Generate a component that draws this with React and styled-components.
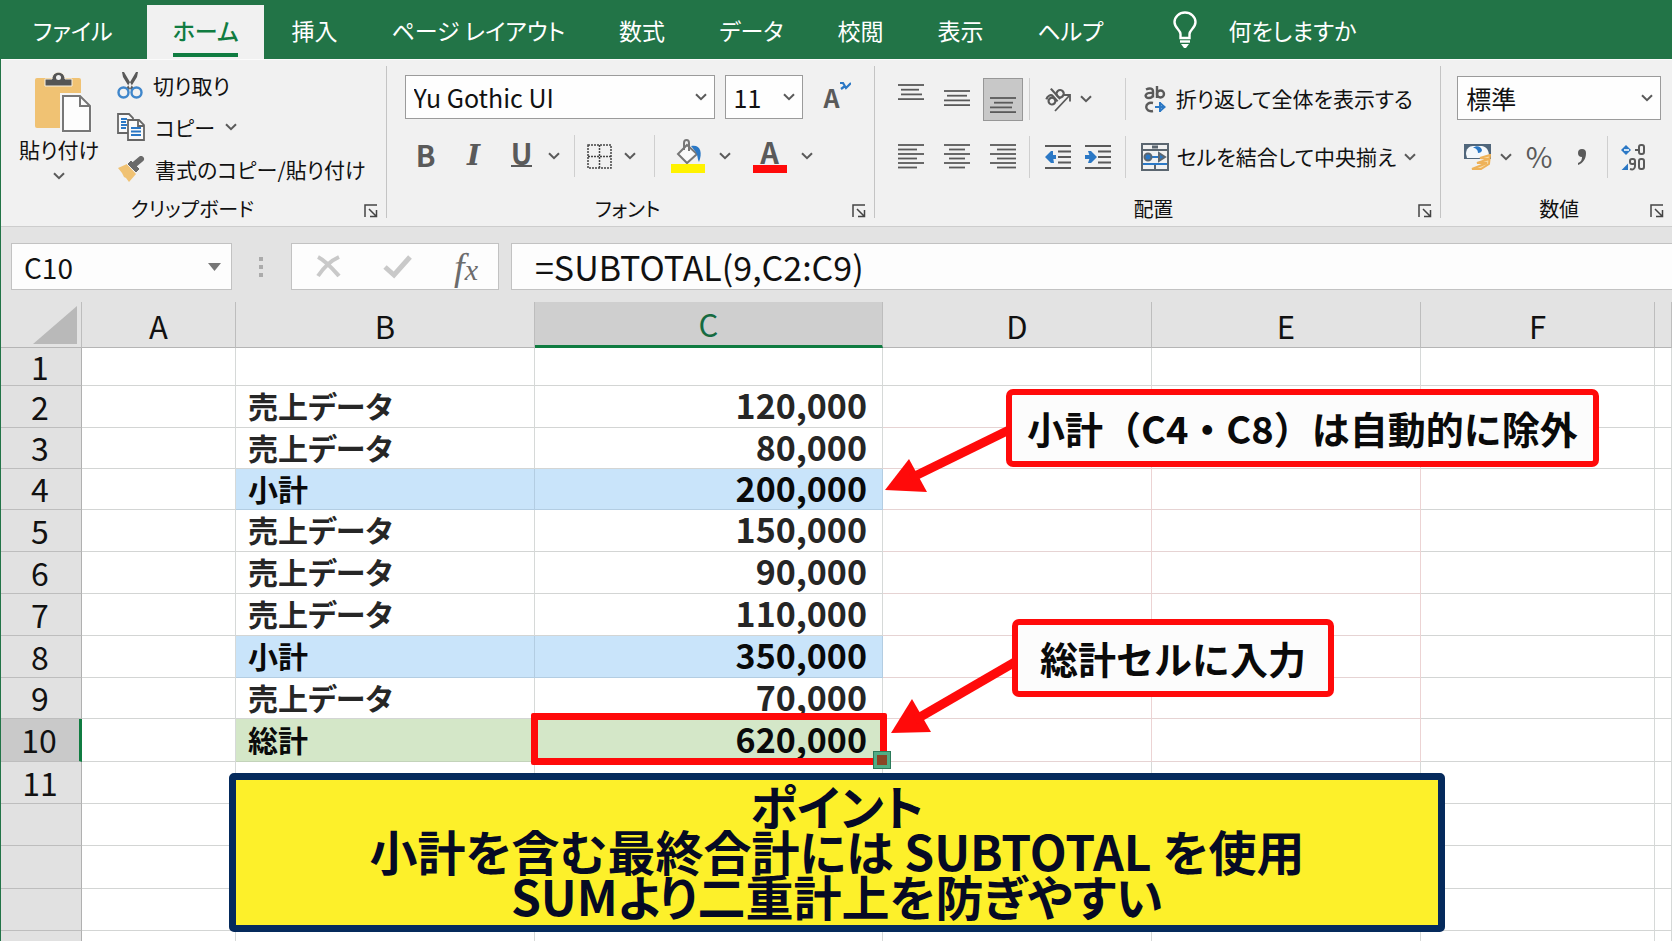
import * as React from 'react';
import styled, { createGlobalStyle, css } from 'styled-components';


const color = {
  green: '#227447',
  accent: '#107c41',
  ribbon: '#f1f1f1',
  chrome: '#e3e3e3',
  line: '#c4c4c4',
  icon: '#5a5a5a',
  blue: '#2b78c5',
  red: '#ff0a0a',
  navy: '#052a5c',
};

const GlobalStyle = createGlobalStyle`
  * {
    box-sizing: border-box;
  }

  body {
    margin: 0;
    font-family: 'Noto Sans CJK JP', 'Noto Sans', sans-serif;
    font-feature-settings: 'palt';
    color: #111111;
  }

  button, input, select {
    font: inherit;
    font-feature-settings: inherit;
    color: inherit;
  }
`;

const Page = styled.div`
  display: flex;
  flex-direction: column;
  height: 100vh;
  overflow: hidden;
  background: ${color.chrome};
  border-left: 1px solid ${color.green};
`;


/* tabs */

const TabBar = styled.nav`
  display: flex;
  align-items: flex-end;
  height: 59px;
  flex-shrink: 0;
  background: ${color.green};
`;

const Tab = styled.button`
  height: 54px;
  padding: 0 ${props => props.$active ? 26 : 27}px;
  border: 0;
  background: ${props => props.$active ? color.ribbon : 'transparent'};
  color: ${props => props.$active ? color.accent : '#ffffff'};
  font-size: 23px;
  font-weight: ${props => props.$active ? 500 : 400};
  line-height: 44px;
  white-space: nowrap;

  &:first-child {
    padding-left: 32px;
    padding-right: 34px;
  }
`;

const TabLabel = styled.span`
  display: block;
  height: 49px;
  border-bottom: ${props => props.$active ? `4px solid ${color.accent}` : '0'};
`;

const TellMe = styled.button`
  display: flex;
  align-items: center;
  gap: 30px;
  height: 54px;
  margin-left: 42px;
  padding: 0 0 4px;
  border: 0;
  background: transparent;
  color: #ffffff;
  font-size: 23px;
  line-height: 44px;
  white-space: nowrap;
`;


/* ribbon */

const Ribbon = styled.div`
  display: flex;
  flex-shrink: 0;
  height: 168px;
  padding-top: 6px;
  background: ${color.ribbon};
  border-top: 1px solid #fbfbfb;
  border-bottom: 1px solid #cdcdcd;
`;

const Group = styled.section`
  position: relative;
  display: flex;
  flex-direction: column;
  justify-content: space-between;
  flex-shrink: 0;
  height: 152px;
  padding: 0 ${props => props.$right}px 0 ${props => props.$left}px;
  border-right: 1px solid ${color.line};
`;

const GroupBody = styled.div`
  display: flex;
  flex-direction: ${props => props.$row ? 'row' : 'column'};
`;

const GroupName = styled.div`
  font-size: 20px;
  line-height: 24px;
  text-align: center;
  margin-bottom: -3px;
`;

const Launcher = styled.button`
  position: absolute;
  right: 8px;
  bottom: 0;
  display: flex;
  padding: 0;
  border: 0;
  background: transparent;
`;

const Tools = styled.div`
  display: flex;
  align-items: center;
  gap: ${props => props.$gap || 0}px;
  height: 44px;
  margin-top: ${props => props.$top || 0}px;
`;

const Tool = styled.button`
  display: flex;
  align-items: center;
  gap: ${props => props.$gap || 0}px;
  padding: 0;
  border: 0;
  background: transparent;
  font-size: 21px;
  line-height: 30px;
  white-space: nowrap;
`;

const ToolText = styled.span`
  padding-bottom: 2px;
`;

const AlignTool = styled(Tool)`
  justify-content: center;
  width: 40px;
  height: 43px;
  margin-right: 6px;
  border: 1px solid ${props => props.$active ? '#979797' : 'transparent'};
  background: ${props => props.$active ? '#c8c8c8' : 'transparent'};
`;

const GlyphTool = styled(Tool)`
  justify-content: center;
  width: ${props => props.$width || 24}px;
  padding-bottom: 5px;
  color: ${color.icon};
  font-size: 29px;
  font-weight: ${props => props.$light ? 400 : 700};

  ${props => props.$italic && css`
    padding-bottom: 0;
    font-family: 'DejaVu Serif', serif;
    font-style: italic;
    font-size: 28px;
  `}
`;

const GrowTool = styled(Tool)`
  align-items: flex-start;
  margin-left: 11px;
  color: ${color.icon};
  font-size: 25px;
  font-weight: 700;
`;

const Underlined = styled.span`
  line-height: 25px;
  border-bottom: 2px solid ${color.icon};
`;

const ColorTool = styled(GlyphTool)`
  padding-bottom: 0;
`;

const ColorBar = styled.span`
  width: 34px;
  line-height: 24px;
  padding-bottom: 2px;
  text-align: center;
  border-bottom: 8px solid ${color.red};
`;

const Rule = styled.span`
  width: 1px;
  height: 42px;
  background: #cfcfcf;
`;

const Spacer = styled.span`
  width: ${props => props.$width}px;
`;

const Paste = styled.button`
  display: flex;
  flex-direction: column;
  align-items: center;
  padding: 5px 0 0;
  border: 0;
  background: transparent;
  font-size: 21px;
  line-height: 32px;

  span {
    margin-bottom: 7px;
  }
`;

const ClipList = styled.div`
  display: flex;
  flex-direction: column;
  gap: 12px;
  padding-top: 4px;
  padding-left: 18px;
`;

const SelectBox = styled.div`
  position: relative;
  flex: 0 0 ${props => props.$width}px;

  svg {
    position: absolute;
    right: 8px;
    top: 18px;
    pointer-events: none;
  }
`;

const Select = styled.select`
  appearance: none;
  width: 100%;
  height: 44px;
  padding: 0 8px;
  border: 1px solid #9b9b9b;
  border-radius: 0;
  background: #fefefe;
  font-size: 25px;
`;


/* formula bar */

const FormulaBar = styled.div`
  display: flex;
  align-items: center;
  flex-shrink: 0;
  height: 75px;
  padding: 4px 0 0 10px;
`;

const Box = styled.div`
  display: flex;
  align-items: center;
  height: 47px;
  border: 1px solid #c2c2c2;
  background: #fdfdfd;
`;

const NameBox = styled(Box)`
  width: 221px;
  padding: 0 10px 0 12px;
`;

const Entry = styled.input`
  flex: 1;
  min-width: 0;
  padding: 0;
  border: 0;
  outline: 0;
  background: transparent;
  font-size: ${props => props.$size}px;
`;

const Grip = styled.div`
  display: flex;
  flex-direction: column;
  gap: 4px;
  margin: 0 28px 0 27px;

  i {
    width: 4px;
    height: 4px;
    background: #ababab;
  }
`;

const Actions = styled(Box)`
  justify-content: space-between;
  width: 208px;
  padding: 0 20px 0 24px;
  margin-right: 12px;
`;

const FormulaBox = styled(Box)`
  flex: 1;
  border-right: 0;
  padding-left: 23px;
`;

const FxButton = styled(Tool)`
  color: #6c6c6c;
  font-family: 'Liberation Serif', serif;
  font-style: italic;
  font-size: 38px;

  small {
    font-size: 30px;
    padding-top: 6px;
  }
`;


/* sheet */

const Sheet = styled.main`
  position: relative;
  flex: 1;
  min-height: 0;
  overflow: hidden;
  background: #ffffff;
`;

const Grid = styled.table`
  width: 100%;
  table-layout: fixed;
  border-collapse: separate;
  border-spacing: 0;
`;

const ColumnHead = styled.th`
  height: 46px;
  padding: 0;
  border-right: 1px solid #bdbdbd;
  border-bottom: ${props => props.$active ? `3px solid ${color.accent}` : '1px solid #b5b5b5'};
  background: ${props => props.$active ? '#cfcfcf' : color.chrome};
  color: ${props => props.$active ? '#166b41' : '#111111'};
  font-size: 31px;
  font-weight: 400;
  line-height: 42px;
  vertical-align: bottom;
`;

const Corner = styled(ColumnHead)`
  text-align: right;

  svg {
    display: block;
    margin: 0 4px 3px auto;
  }
`;

const RowHead = styled.th`
  padding: 0 2px 2px 0;
  border-bottom: 1px solid #bdbdbd;
  border-right: ${props => props.$active ? `3px solid ${color.accent}` : '1px solid #b0b0b0'};
  background: ${props => props.$active ? '#c9c9c9' : '#e1e1e1'};
  font-size: 32px;
  font-weight: 400;
  line-height: 34px;
`;

const fills = {
  subtotal: '#c9e4fa',
  total: '#d4e7c8',
};

const lines = {
  subtotal: '#b3cde2',
  total: '#c3d3ba',
};

const Cell = styled.td`
  position: relative;
  padding: 0 15px 3px 12px;
  border-right: 1px solid ${props => lines[props.$kind] || (props.$tint ? '#ecd3d3' : '#d6d9d8')};
  border-bottom: 1px solid ${props => lines[props.$kind] || (props.$tint ? '#e6d3d3' : '#d3d5d4')};
  background: ${props => fills[props.$kind] || '#ffffff'};
  color: ${props => props.$kind === 'data' ? '#262626' : '#0a0a0a'};
  text-align: ${props => props.$number ? 'right' : 'left'};
  font-size: ${props => props.$number ? 34 : 30}px;
  font-weight: 700;
  line-height: 34px;
  white-space: nowrap;
`;

const Row = styled.tr`
  height: ${props => props.$height}px;
`;

const Selection = styled.div`
  position: absolute;
  inset: -6px -5px -4px -4px;
  z-index: 1;
  border: 7px solid ${color.red};
  border-radius: 2px;
`;

const FillHandle = styled.span`
  position: absolute;
  right: -11px;
  bottom: -11px;
  width: 18px;
  height: 18px;
  border: 4px solid #4fae86;
  outline: 1px solid #2c7a5a;
  outline-offset: -1px;
  background: #8a4526;
`;

const Callout = styled.aside`
  position: absolute;
  left: ${props => props.$left}px;
  top: ${props => props.$top}px;
  padding: 0 ${props => props.$pad}px;
  border: 6px solid ${color.red};
  border-radius: 7px;
  background: #fcfcfc;
  color: #0a0a0a;
  font-size: 38px;
  font-weight: 700;
  font-feature-settings: normal;
  line-height: 66px;
  white-space: nowrap;
`;

const Arrows = styled.svg`
  position: absolute;
  left: 860px;
  top: 100px;
`;

const Banner = styled.aside`
  position: absolute;
  left: 228px;
  right: 227px;
  top: 471px;
  padding: 3px 0 7px;
  border: 7px solid ${color.navy};
  border-radius: 5px;
  background: #fdf02a;
  color: #060a24;
  text-align: center;
  font-size: 48px;
  font-weight: 700;
  line-height: 45px;

  p {
    margin: 0;
    white-space: nowrap;
  }
`;


/* drawings */

const Chevron = () => (
  <svg width="12" height="8" viewBox="0 0 12 8" fill="none" stroke={ color.icon } strokeWidth="2">
    <path d="M1 1.2l5 5 5-5"/>
  </svg>
);

const Bulb = () => (
  <svg width="26" height="38" viewBox="0 0 26 38" fill="none" stroke="#ffffff" strokeWidth="2.4">
    <path d="M8.500 27v-4c0-4-6-6-6-12a10.500 9.500 0 0 1 21 0c0 6-6 8-6 12v4z"/>
    <path d="M8 30.500h10"/>
    <path d="M9 33h8l-3 4h-2z" fill="#ffffff" stroke="none"/>
  </svg>
);

const PasteIcon = () => (
  <svg width="66" height="62" viewBox="-8 0 66 62">
    <rect x="1" y="7" width="46" height="50" rx="2" fill="#f0c273"/>
    <path d="M11 15V8h7c0-9 13-9 13 0h7v7z" fill="#555" stroke="#f8f1e4" strokeWidth="1"/>
    <circle cx="24.500" cy="6.500" r="2.500" fill="#f1f1f1"/>
    <path d="M28 24h18l11 11v26H28z" fill="#fff" stroke="#f5f5f5" strokeWidth="4"/>
    <path d="M29 25h17l10 10v25H29z" fill="#fdfdfd" stroke="#777" strokeWidth="2"/>
    <path d="M46 25v10h10" fill="none" stroke="#777" strokeWidth="2"/>
  </svg>
);

const Scissors = () => (
  <svg width="26" height="28" viewBox="0 0 26 28" fill="none">
    <path d="M5 1l2 0 10 17-3 1L6 6zM21 1l-2 0L9 18l3 1L20 6z" fill="#595959"/>
    <circle cx="6.500" cy="21.500" r="5" stroke="#3f86cb" strokeWidth="2.400"/>
    <circle cx="19.500" cy="21.500" r="5" stroke="#3f86cb" strokeWidth="2.400"/>
  </svg>
);

const CopyIcon = () => (
  <svg width="28" height="28" viewBox="0 0 28 28" fill="#fafafa" stroke="#666" strokeWidth="1.800">
    <path d="M1 1h11l4 4v15H1z"/>
    <path d="M4 6h6M4 9h5M4 12h6M4 15h5" stroke={ color.blue }/>
    <path d="M11 7h11l5 5v15H11z"/>
    <path d="M21 7v6h6" fill="none"/>
    <path d="M14 15h10M14 18.500h10M14 22h10" stroke={ color.blue }/>
  </svg>
);

const Brush = () => (
  <svg width="28" height="26" viewBox="0 0 28 26">
    <path d="M1 12l9-4 9 10-7 8-3-4-2-1-2-4z" fill="#f0c273"/>
    <path d="M10 8l4-4 9 9-4 4z" fill="#6a6a6a" stroke="#f1f1f1" strokeWidth="1"/>
    <path d="M18 8l6-5" stroke="#6a6a6a" strokeWidth="6" strokeLinecap="round"/>
  </svg>
);

const GrowFont = () => (
  <svg width="11" height="8" viewBox="0 0 11 8" fill="none" stroke={ color.blue } strokeWidth="2.200">
    <path d="M0 1h3l3 5 5-5M1 7l4-3"/>
  </svg>
);

const Borders = () => (
  <svg width="25" height="25" viewBox="0 0 25 25" fill="none" stroke="#444" strokeWidth="1.500" strokeDasharray="2 1">
    <path d="M1 1h23v23H1zM12.500 1v23M1 12.500h23"/>
  </svg>
);

const Bucket = () => (
  <svg width="34" height="34" viewBox="0 0 34 34" fill="none">
    <path d="M16 6l10 9-10 9-9-9z" fill="#fafafa" stroke="#777" strokeWidth="2"/>
    <path d="M13 11V4c0-4 5-4 5 0v8" stroke="#777" strokeWidth="2"/>
    <path d="M20 7c9-2 12 6 8 16-2-4-1-8-4-11z" fill={ color.blue }/>
    <path d="M0 25h34v9H0z" fill="#fff200"/>
  </svg>
);

const alignLines = {
  top: [[0, 26], [3, 21], [3, 24], [0, 26]],
  middle: [[0, 26], [3, 23], [0, 26], [0, 26]],
  bottom: [[0, 26], [4, 23], [0, 22], [0, 26]],
  left: [[0, 26], [0, 19], [0, 26], [0, 19], [0, 26], [0, 19]],
  center: [[0, 26], [5, 21], [0, 26], [5, 21], [0, 26], [5, 21]],
  right: [[0, 26], [7, 26], [0, 26], [7, 26], [0, 26], [7, 26]],
};

const starts = { top: 1, middle: 7, bottom: 14 };

const AlignIcon = ({ kind }) => {
  const short = kind in starts;

  return (
    <svg width="26" height="30" viewBox="0 0 26 30" stroke={ color.icon } strokeWidth="1.800">
      {
        alignLines[kind].map(([from, to], i) => (
          <path key={ i } d={ `M${from} ${short ? starts[kind] + i * 4.7 : 3 + i * 4.5}H${to}` }/>
        ))
      }
    </svg>
  );
};

const Indent = ({ right }) => (
  <svg width="26" height="26" viewBox="0 0 26 26" fill="none" stroke={ color.icon } strokeWidth="1.800">
    <path d="M0 2h26M13 7.500h13M13 13h13M13 18.500h13M0 24h26"/>
    <path d={ right ? 'M0 13h8' : 'M11 13H4' } stroke={ color.blue } strokeWidth="4"/>
    <path d={ right ? 'M3 7h3l6 6-6 6H3l2-6z' : 'M8 7H6l-6 6 6 6h3l-1-6z' } fill={ color.blue } stroke="none"/>
  </svg>
);

const Orientation = () => (
  <svg width="27" height="27" viewBox="0 0 27 27" fill="none" stroke={ color.icon } strokeWidth="2.200">
    <g transform="rotate(-42 10 11)">
      <circle cx="5" cy="12" r="3.400"/>
      <path d="M2 7c3-2 7-1 7 2v7"/>
      <circle cx="16" cy="12" r="3.600"/>
      <path d="M12.500 2v14"/>
    </g>
    <path d="M10 25L25 9M18.500 9H25v6.500" strokeWidth="1.800"/>
  </svg>
);

const WrapIcon = () => (
  <svg width="22" height="27" viewBox="0 0 22 27" fill="none" stroke={ color.icon } strokeWidth="2.400">
    <path d="M2 3.500c4-2 7-1 7 2v6M9 7c-9-1-9 5-4 5 2 0 4-1 4-3M13 0v12"/>
    <circle cx="16.500" cy="8" r="3.500"/>
    <path d="M9 17c-9-2-9 10 0 8"/>
    <path d="M11 21h10M16 16v10M16 17l4.500 4-4.500 4" stroke={ color.blue } strokeWidth="2"/>
  </svg>
);

const Merge = () => (
  <svg width="28" height="28" viewBox="0 0 28 28" fill="none" stroke="#5b6670" strokeWidth="2">
    <path d="M1 1h26v26H1zM1 7h26M14 22v5"/>
    <path d="M11 4h6" strokeWidth="3"/>
    <path d="M5 14h18M2 21h24" stroke={ color.blue }/>
    <path d="M18 10v8l6-4z" fill={ color.blue }/>
    <circle cx="7" cy="14" r="3.500" fill={ color.blue }/>
  </svg>
);

const Accounting = () => (
  <svg width="27" height="27" viewBox="0 0 27 27" fill="none">
    <path d="M0 0h27v15H0z" fill="#50667b"/>
    <path d="M2 10c0-5 3-8 7-8h9c5 1 7 5 7 10l-9 2H3z" fill="#f4f8fb"/>
    <path d="M9 4c3-3 8-2 9 2 0 2-2 3-4 3 0-3-2-5-5-5z" fill={ color.blue }/>
    <path d="M26 11l-10 3 9 1-12 4 10 0-15 6h9l8-5z" fill="#f7dba6" stroke="#eeb259" strokeWidth="2"/>
  </svg>
);

const Decimals = () => (
  <svg width="26" height="27" viewBox="0 0 26 27" fill="none" stroke={ color.icon } strokeWidth="2">
    <path d="M6 1l5 5-5 5-5-5z" fill={ color.blue } stroke="none"/>
    <path d="M4 6h5" stroke="#cfe2f4"/>
    <path d="M15 6h3"/>
    <rect x="19" y="1" width="5" height="9" rx="2"/>
    <path d="M4 25h3v-3z" fill={ color.blue } stroke={ color.blue }/>
    <rect x="10" y="15" width="5" height="5" rx="2"/>
    <path d="M15 18v4c0 3-2 4-5 3"/>
    <rect x="19" y="15" width="5" height="10" rx="2"/>
  </svg>
);

const Comma = () => (
  <svg width="10" height="18" viewBox="0 0 10 18">
    <path d="M5 1a4 4 0 0 1 4 4c0 6-3 10-8 12v-2c3-1 4-3 4-6a4 4 0 0 1 0-8z" fill={ color.icon }/>
  </svg>
);

const LauncherIcon = () => (
  <svg width="14" height="14" viewBox="0 0 14 14" fill="none" stroke="#444" strokeWidth="1.500">
    <path d="M1 13V1h12M5 5l7 7M12.500 6v6.500H6"/>
  </svg>
);

const Cross = () => (
  <svg width="25" height="23" viewBox="0 0 25 23" fill="none" stroke="#c9c9c9" strokeWidth="4">
    <path d="M2 2c8 4 14 11 21 19M23 2C14 6 8 12 2 21"/>
  </svg>
);

const Check = () => (
  <svg width="29" height="24" viewBox="0 0 29 24" fill="none" stroke="#c9c9c9" strokeWidth="5">
    <path d="M2 12l9 8L27 2"/>
  </svg>
);


const tabs = ['ファイル', 'ホーム', '挿入', 'ページ レイアウト', '数式', 'データ', '校閲', '表示', 'ヘルプ'];

const columns = [
  { name: 'A', width: 154 },
  { name: 'B', width: 299 },
  { name: 'C', width: 348 },
  { name: 'D', width: 269 },
  { name: 'E', width: 269 },
  { name: 'F', width: 234 },
  { name: '' },
];

const rows = [
  { id: '1', height: 38 },
  { id: '2', height: 42, kind: 'data', label: '売上データ', value: '120,000' },
  { id: '3', height: 41, kind: 'data', label: '売上データ', value: '80,000' },
  { id: '4', height: 41, kind: 'subtotal', label: '小計', value: '200,000' },
  { id: '5', height: 42, kind: 'data', label: '売上データ', value: '150,000' },
  { id: '6', height: 42, kind: 'data', label: '売上データ', value: '90,000' },
  { id: '7', height: 42, kind: 'data', label: '売上データ', value: '110,000' },
  { id: '8', height: 42, kind: 'subtotal', label: '小計', value: '350,000' },
  { id: '9', height: 41, kind: 'data', label: '売上データ', value: '70,000' },
  { id: '10', height: 43, kind: 'total', label: '総計', value: '620,000' },
  { id: '11', height: 42 },
  { id: '', height: 42 },
  { id: '', height: 43 },
  { id: '', height: 42 },
  { id: '', height: 42 },
];

const DropDown = ({ label, width, value }) => (
  <SelectBox $width={ width }>
    <Select aria-label={ label } defaultValue={ value }>
      <option>{ value }</option>
    </Select>
    <Chevron/>
  </SelectBox>
);

const RibbonGroup = ({ name, row, left, right, children }) => (
  <Group $left={ left } $right={ right } aria-label={ name }>
    <GroupBody $row={ row }>{ children }</GroupBody>
    <GroupName>{ name }</GroupName>
    <Launcher aria-label={ `${name}の設定` }><LauncherIcon/></Launcher>
  </Group>
);

const ClipboardGroup = () => (
  <RibbonGroup name="クリップボード" row left={ 18 } right={ 20 }>
    <Paste>
      <PasteIcon/>
      <span>貼り付け</span>
      <Chevron/>
    </Paste>
    <ClipList>
      <Tool $gap={ 10 }><Scissors/>切り取り</Tool>
      <Tool $gap={ 10 }><CopyIcon/>コピー<Chevron/></Tool>
      <Tool $gap={ 10 }><Brush/>書式のコピー/貼り付け</Tool>
    </ClipList>
  </RibbonGroup>
);

const FontGroup = () => (
  <RibbonGroup name="フォント" left={ 18 } right={ 23 }>
    <Tools $top={ 9 } $gap={ 10 }>
      <DropDown label="フォント名" width={ 310 } value="Yu Gothic UI"/>
      <DropDown label="フォント サイズ" width={ 78 } value="11"/>
      <GrowTool aria-label="フォント サイズの拡大">A<GrowFont/></GrowTool>
    </Tools>
    <Tools $top={ 15 }>
      <Spacer $width={ 9 }/>
      <GlyphTool>B</GlyphTool>
      <Spacer $width={ 24 }/>
      <GlyphTool $italic>I</GlyphTool>
      <Spacer $width={ 24 }/>
      <GlyphTool><Underlined>U</Underlined></GlyphTool>
      <Spacer $width={ 14 }/>
      <Tool aria-label="下線の種類"><Chevron/></Tool>
      <Spacer $width={ 14 }/>
      <Rule/>
      <Spacer $width={ 12 }/>
      <Tool $gap={ 12 } aria-label="罫線"><Borders/><Chevron/></Tool>
      <Spacer $width={ 18 }/>
      <Rule/>
      <Spacer $width={ 16 }/>
      <Tool $gap={ 14 } aria-label="塗りつぶしの色"><Bucket/><Chevron/></Tool>
      <Spacer $width={ 22 }/>
      <ColorTool $width={ 60 } $gap={ 14 } aria-label="フォントの色">
        <ColorBar>A</ColorBar>
        <Chevron/>
      </ColorTool>
    </Tools>
  </RibbonGroup>
);

const AlignGroup = () => (
  <RibbonGroup name="配置" left={ 16 } right={ 24 }>
    <Tools $top={ 11 }>
      <AlignTool aria-label="上揃え"><AlignIcon kind="top"/></AlignTool>
      <AlignTool aria-label="上下中央揃え"><AlignIcon kind="middle"/></AlignTool>
      <AlignTool $active aria-label="下揃え"><AlignIcon kind="bottom"/></AlignTool>
      <Rule/>
      <Spacer $width={ 15 }/>
      <Tool $gap={ 8 } aria-label="方向"><Orientation/><Chevron/></Tool>
      <Spacer $width={ 33 }/>
      <Rule/>
      <Spacer $width={ 18 }/>
      <Tool $gap={ 10 }><WrapIcon/><ToolText>折り返して全体を表示する</ToolText></Tool>
    </Tools>
    <Tools $top={ 14 }>
      <AlignTool aria-label="左揃え"><AlignIcon kind="left"/></AlignTool>
      <AlignTool aria-label="中央揃え"><AlignIcon kind="center"/></AlignTool>
      <AlignTool aria-label="右揃え"><AlignIcon kind="right"/></AlignTool>
      <Rule/>
      <Spacer $width={ 15 }/>
      <Tool aria-label="インデントを減らす"><Indent/></Tool>
      <Spacer $width={ 14 }/>
      <Tool aria-label="インデントを増やす"><Indent right/></Tool>
      <Spacer $width={ 14 }/>
      <Rule/>
      <Spacer $width={ 15 }/>
      <Tool $gap={ 8 }><Merge/><ToolText>セルを結合して中央揃え</ToolText><Chevron/></Tool>
    </Tools>
  </RibbonGroup>
);

const NumberGroup = () => (
  <RibbonGroup name="数値" left={ 16 } right={ 11 }>
    <Tools $top={ 10 }>
      <DropDown label="表示形式" width={ 204 } value="標準"/>
    </Tools>
    <Tools $top={ 15 }>
      <Spacer $width={ 7 }/>
      <Tool $gap={ 9 } aria-label="会計"><Accounting/><Chevron/></Tool>
      <Spacer $width={ 13 }/>
      <GlyphTool $light $width={ 28 }>%</GlyphTool>
      <Spacer $width={ 24 }/>
      <Tool aria-label="桁区切り"><Comma/></Tool>
      <Spacer $width={ 20 }/>
      <Rule/>
      <Spacer $width={ 12 }/>
      <Tool aria-label="小数点以下の表示桁数を増やす"><Decimals/></Tool>
    </Tools>
  </RibbonGroup>
);

const SheetRow = ({ row }) => (
  <Row $height={ row.height }>
    <RowHead scope="row" $active={ row.id === '10' }>{ row.id }</RowHead>
    <Cell/>
    <Cell $kind={ row.kind }>{ row.label }</Cell>
    <Cell $kind={ row.kind } $number>
      { row.value }
      { row.kind === 'total' && <Selection><FillHandle/></Selection> }
    </Cell>
    <Cell $tint={ row.kind }/>
    <Cell $tint={ row.kind }/>
    <Cell/>
    <Cell/>
  </Row>
);

export default function App() {
  return (
    <Page>
      <GlobalStyle/>
      <TabBar>
        {
          tabs.map(tab => (
            <Tab key={ tab } $active={ tab === 'ホーム' }>
              <TabLabel $active={ tab === 'ホーム' }>{ tab }</TabLabel>
            </Tab>
          ))
        }
        <TellMe><Bulb/>何をしますか</TellMe>
      </TabBar>
      <Ribbon>
        <ClipboardGroup/>
        <FontGroup/>
        <AlignGroup/>
        <NumberGroup/>
      </Ribbon>
      <FormulaBar>
        <NameBox>
          <Entry $size={ 28 } aria-label="名前ボックス" defaultValue="C10"/>
          <svg width="13" height="8" viewBox="0 0 13 8"><path d="M0 0h13L6.500 8z" fill="#777"/></svg>
        </NameBox>
        <Grip><i/><i/><i/></Grip>
        <Actions>
          <Tool aria-label="キャンセル"><Cross/></Tool>
          <Tool aria-label="入力"><Check/></Tool>
          <FxButton>f<small>x</small></FxButton>
        </Actions>
        <FormulaBox>
          <Entry $size={ 34 } aria-label="数式バー" defaultValue="=SUBTOTAL(9,C2:C9)"/>
        </FormulaBox>
      </FormulaBar>
      <Sheet>
        <Grid>
          <colgroup>
            <col width="81"/>
            { columns.map(column => <col key={ column.name } width={ column.width }/>) }
          </colgroup>
          <thead>
            <tr>
              <Corner as="td">
                <svg width="44" height="38" viewBox="0 0 44 38"><path d="M44 0v38H0z" fill="#b9b9b9"/></svg>
              </Corner>
              {
                columns.map(column => (
                  <ColumnHead key={ column.name } scope="col" $active={ column.name === 'C' }>{ column.name }</ColumnHead>
                ))
              }
            </tr>
          </thead>
          <tbody>
            { rows.map((row, i) => <SheetRow key={ i } row={ row }/>) }
          </tbody>
        </Grid>
        <Arrows width="160" height="350" viewBox="0 0 160 350" fill={ color.red } stroke={ color.red }>
          <path d="M24 88L48 57 66 90z" stroke="none"/>
          <path d="M50 76L148 28" strokeWidth="9"/>
          <path d="M30 331L51 297 70 330z" stroke="none"/>
          <path d="M54 318L154 260" strokeWidth="9"/>
        </Arrows>
        <Callout $left={ 1005 } $top={ 87 } $pad={ 15 }>小計（C4・C8）は自動的に除外</Callout>
        <Callout $left={ 1011 } $top={ 317 } $pad={ 22 }>総計セルに入力</Callout>
        <Banner>
          <p>ポイント</p>
          <p>小計を含む最終合計には SUBTOTAL を使用</p>
          <p>SUMより二重計上を防ぎやすい</p>
        </Banner>
      </Sheet>
    </Page>
  );
}
